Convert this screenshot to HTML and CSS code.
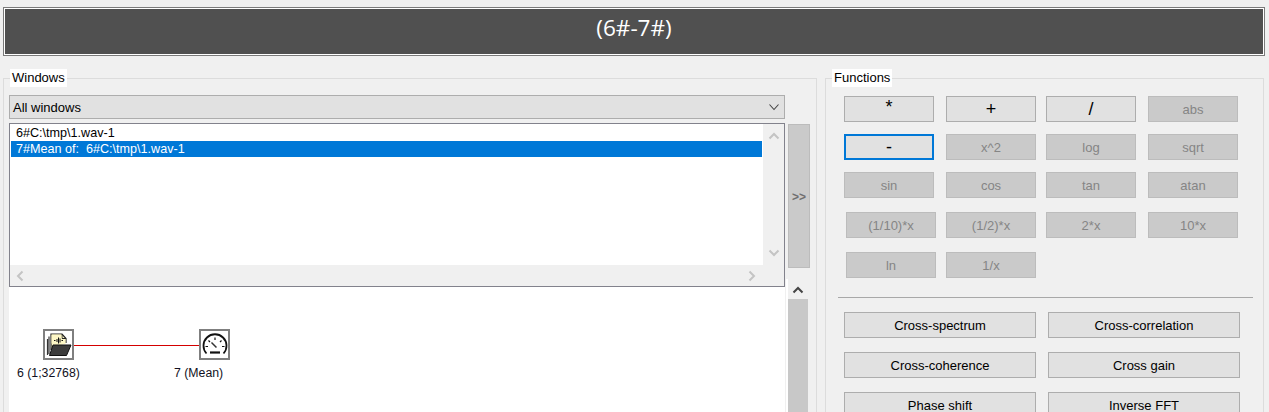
FILE: index.html
```html
<!DOCTYPE html>
<html lang="en">
<head>
<meta charset="utf-8">
<title>(6#-7#)</title>
<link rel="stylesheet" href="styles.css">
</head>
<body>
<header class="title-bar"><h1 class="title-text">(6#-7#)</h1></header>
<main class="main">
  <fieldset class="group group-windows">
    <legend class="group-label">Windows</legend>
    <div class="windows-body">
      <div class="windows-left">
        <div class="select">
          <span>All windows</span>
          <svg class="select-arrow" width="12" height="8" viewBox="0 0 12 8"><path d="M1.500 1.500 6 6.500 10.500 1.500" fill="none" stroke="#444" stroke-width="1.100"/></svg>
        </div>
        <div class="list">
          <div class="list-items">
            <div class="list-item">6#C:\tmp\1.wav-1</div>
            <div class="list-item list-item-selected">7#Mean of:&nbsp; 6#C:\tmp\1.wav-1</div>
          </div>
          <div class="list-vscroll">
            <svg width="12" height="8" viewBox="0 0 12 8"><path d="M1.500 6.500 6 2 10.500 6.500" fill="none" stroke="#c4c4c4" stroke-width="2"/></svg>
            <svg width="12" height="8" viewBox="0 0 12 8"><path d="M1.500 1.500 6 6 10.500 1.500" fill="none" stroke="#c4c4c4" stroke-width="2"/></svg>
          </div>
          <div class="list-hscroll">
            <svg width="8" height="12" viewBox="0 0 8 12"><path d="M6.500 1.500 2 6 6.500 10.500" fill="none" stroke="#c4c4c4" stroke-width="2"/></svg>
            <svg width="8" height="12" viewBox="0 0 8 12"><path d="M1.500 1.500 6 6 1.500 10.500" fill="none" stroke="#c4c4c4" stroke-width="2"/></svg>
          </div>
        </div>
        <div class="diagram">
          <div class="node">
            <div class="node-box">
              <svg width="26" height="27" viewBox="0 0 26 27">
                <path d="M5 19V3h11l4 4.500V12" fill="#fdf7c6" stroke="#222" stroke-width="1.200"/>
                <path d="M16 3V7.500h4" fill="none" stroke="#222"/>
                <rect x="5.500" y="3.600" width="10" height="9" fill="#fdf7c6"/>
                <rect x="15.500" y="8" width="4" height="5" fill="#fdf7c6"/>
                <path d="M3 5.500V23M1.500 8V24" fill="none" stroke="#333" stroke-width="1.200"/>
                <path d="M8 9.500h1.500M11 8v3M12.500 6.500v6M14 7.500v4M15.500 9.500h1.500" fill="none" stroke="#111"/>
                <path d="M3.500 24.500 7 14H25L20.500 24.500Z" fill="#3c3c3c" stroke="#111"/>
              </svg>
            </div>
            <span class="node-label node-label-source">6 (1;32768)</span>
          </div>
          <div class="link"></div>
          <div class="node">
            <div class="node-box">
              <svg width="26" height="26" viewBox="0 0 26 26">
                <path d="M4.500 21.500A11.500 11.500 0 1 1 21.500 21.500" fill="none" stroke="#111" stroke-width="1.800"/>
                <path d="M13 5.500v2.500M6.500 8.500 8 10M19.500 8.500 18 10M3.500 14.500h2.500M22.500 14.500H20" fill="none" stroke="#111" stroke-width="1.200"/>
                <path d="M9.500 10.500 14.500 15.500" fill="none" stroke="#333" stroke-width="1.500"/>
                <path d="M8 20.500h10" fill="none" stroke="#111" stroke-width="2.200"/>
              </svg>
            </div>
            <span class="node-label node-label-mean">7 (Mean)</span>
          </div>
        </div>
      </div>
      <div class="windows-right">
        <button class="btn btn-off btn-move" type="button">&gt;&gt;</button>
        <div class="panel-scroll-wrap">
          <div class="panel-scroll">
            <svg class="panel-scroll-arrow" width="12" height="8" viewBox="0 0 12 8"><path d="M1.500 6.500 6 2 10.500 6.500" fill="none" stroke="#444" stroke-width="2"/></svg>
            <div class="panel-scroll-thumb"></div>
          </div>
        </div>
      </div>
    </div>
  </fieldset>
  <fieldset class="group group-functions">
    <legend class="group-label">Functions</legend>
    <div class="functions-body">
      <div class="fn-row fn-row-first">
        <button class="btn btn-on btn-op btn-star" type="button">*</button>
        <button class="btn btn-on btn-op btn-plus" type="button">+</button>
        <button class="btn btn-on btn-op" type="button">/</button>
        <button class="btn btn-off" type="button">abs</button>
      </div>
      <div class="fn-row">
        <button class="btn btn-on btn-focus btn-op" type="button">-</button>
        <button class="btn btn-off" type="button">x^2</button>
        <button class="btn btn-off" type="button">log</button>
        <button class="btn btn-off" type="button">sqrt</button>
      </div>
      <div class="fn-row">
        <button class="btn btn-off" type="button">sin</button>
        <button class="btn btn-off" type="button">cos</button>
        <button class="btn btn-off" type="button">tan</button>
        <button class="btn btn-off" type="button">atan</button>
      </div>
      <div class="fn-row fn-row-shift">
        <button class="btn btn-off" type="button">(1/10)*x</button>
        <button class="btn btn-off" type="button">(1/2)*x</button>
        <button class="btn btn-off" type="button">2*x</button>
        <button class="btn btn-off" type="button">10*x</button>
      </div>
      <div class="fn-row fn-row-shift">
        <button class="btn btn-off" type="button">ln</button>
        <button class="btn btn-off" type="button">1/x</button>
      </div>
      <hr class="rule">
      <div class="wide-grid">
        <button class="btn btn-on" type="button">Cross-spectrum</button>
        <button class="btn btn-on" type="button">Cross-correlation</button>
        <button class="btn btn-on" type="button">Cross-coherence</button>
        <button class="btn btn-on" type="button">Cross gain</button>
        <button class="btn btn-on" type="button">Phase shift</button>
        <button class="btn btn-on" type="button">Inverse FFT</button>
      </div>
    </div>
  </fieldset>
</main>
</body>
</html>
```
FILE: styles.css
```css
* { box-sizing: border-box; }
html, body { height: 412px; overflow: hidden; }
body {
  margin: 0;
  padding: 7px 4px 0 3px;
  background: #f0f0f0;
  font-family: "Liberation Sans", Arial, sans-serif;
  font-size: 13px;
  color: #000;
}
.title-bar {
  height: 49px;
  border: 1px solid #7a7a7a;
  background: #505050;
  box-shadow: inset 0 0 0 1px #fff;
  display: flex;
  justify-content: center;
  padding-top: 5px;
}
.title-text {
  margin: 0;
  font-family: "Open Sans", sans-serif;
  font-weight: 400;
  font-size: 22.500px;
  line-height: 30px;
  color: #fff;
}
.main {
  display: flex;
  gap: 8px;
  margin-top: 13px;
  align-items: flex-start;
  height: 343px;
  overflow: hidden;
}
.group {
  margin: 0;
  min-width: 0;
  height: 400px;
  border: 1px solid #dcdcdc;
  padding: 0;
}
.group-windows { width: 814px; }
.group-functions { width: 439px; }
.group-label {
  height: 18px;
  margin-left: 6px;
  padding: 0 2px;
  background: #fff;
  line-height: 18px;
}
.windows-body { display: flex; padding: 8px 0 0 5px; }
.windows-left { width: 776px; flex: none; display: flex; flex-direction: column; }
.select {
  height: 24px;
  background: #e1e1e1;
  border: 1px solid #adadad;
  padding: 0 4px 0 3px;
  display: flex;
  align-items: center;
  justify-content: space-between;
}
.list {
  height: 164px;
  margin-top: 4px;
  background: #fff;
  border: 1px solid #82828c;
  display: grid;
  grid-template-columns: 1fr 21px;
  grid-template-rows: 1fr 21px;
}
.list-items { padding: 1px 1px 0 1px; }
.list-item { height: 16px; line-height: 16px; padding-left: 5px; font-size: 12.600px; }
.list-item-selected { background: #0078d7; color: #fff; }
.list-vscroll {
  background: #f0f0f0;
  display: flex;
  flex-direction: column;
  align-items: center;
  justify-content: space-between;
  padding: 8px 0;
}
.list-hscroll {
  grid-column: 1 / 3;
  background: #f0f0f0;
  display: flex;
  align-items: center;
  justify-content: space-between;
  padding: 0 28px 0 6px;
}
.diagram {
  height: 125px;
  background: #fff;
  padding: 42px 0 0 34px;
  display: flex;
  align-items: flex-start;
}
.node { position: relative; flex: none; }
.node-box {
  width: 31px;
  height: 31px;
  border: 2px solid #7f7f7f;
  background: #fff;
  display: flex;
  align-items: center;
  justify-content: center;
}
.node-label { position: absolute; top: 36px; white-space: nowrap; font-size: 12.300px; line-height: 16px; color: #111122; }
.node-label-source { left: -26px; }
.node-label-mean { left: -25px; }
.link { width: 125px; height: 1px; margin-top: 16px; background: #d40000; }
.windows-right { flex: none; display: flex; flex-direction: column; padding-left: 1px; }
.btn {
  font-family: "Liberation Sans", Arial, sans-serif;
  font-size: 13px;
  height: 26px;
  padding: 0;
  border: 1px solid #adadad;
  color: #000;
}
.btn-on { background: #e1e1e1; }
.btn-off { background: #cacaca; border-color: #bcbcbc; color: #858585; }
.btn-focus { border: 2px solid #0078d7; }
.btn-op { font-size: 18px; line-height: 20px; }
.btn-star { padding-bottom: 4px; }
.btn-plus { font-weight: 400; }
.windows-right .btn-move {
  width: 22px;
  height: 144px;
  margin: 29px 0 0 2px;
  font-weight: 700;
  font-size: 12px;
  color: #707070;
  padding-top: 1px;
}
.panel-scroll-wrap { margin-top: 11px; flex: 1; border-left: 2px solid #fff; }
.panel-scroll { width: 20px; display: flex; flex-direction: column; }
.panel-scroll-arrow { margin: 7px auto 5px 4px; }
.panel-scroll-thumb { height: 120px; background: #c8c8c8; }
.functions-body { padding-left: 18px; }
.fn-row { display: flex; margin-top: 12px; }
.fn-row-first { margin-top: 9px; }
.fn-row .btn { width: 90px; flex: none; margin-right: 12px; }
.fn-row .btn:nth-child(2) { margin-right: 10px; }
.fn-row-shift { margin-top: 14px; }
.fn-row-shift .btn:first-child { margin-left: 2px; margin-right: 10px; }
.rule {
  height: 1px;
  border: 0;
  margin: 19px 10px 14px -6px;
  background: #a8a8a8;
}
.wide-grid {
  display: grid;
  grid-template-columns: 192px 192px;
  column-gap: 12px;
  row-gap: 14px;
}
```
